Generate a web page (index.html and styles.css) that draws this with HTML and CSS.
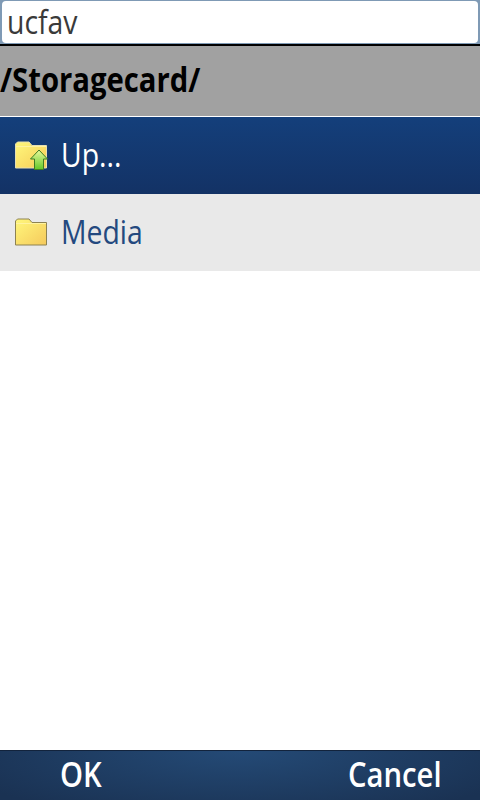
FILE: index.html
```html
<!DOCTYPE html>
<html lang="en">
<head>
    <meta charset="UTF-8">
    <meta name="viewport" content="width=device-width, initial-scale=1.0">
    <title>Select folder</title>
    <link rel="stylesheet" href="styles.css">
</head>
<body>
    <div class="page">
        <div class="name-bar">
            <div class="name-box"><span class="narrow">ucfav</span></div>
        </div>

        <div class="path"><span class="narrow">/Storagecard/</span></div>

        <div class="folder-list">
            <div class="folder-row selected">
                <svg class="folder-icon" width="34" height="30" viewBox="0 0 34 30">
                    <defs>
                        <linearGradient id="fillUp" x1="0" y1="0" x2="1" y2="1">
                            <stop offset="0" stop-color="#fff87c"/>
                            <stop offset="1" stop-color="#f5cb58"/>
                        </linearGradient>
                        <linearGradient id="fillArrow" x1="0" y1="0" x2="0" y2="1">
                            <stop offset="0" stop-color="#e8fa9c"/>
                            <stop offset="1" stop-color="#64c828"/>
                        </linearGradient>
                    </defs>
                    <path d="M1.5 27V3L3.5 1H15L18 4.5H32.5V27Z" fill="url(#fillUp)" stroke="#e6dfb0"/>
                    <path d="M2 5.5H32" stroke="#fff3a0" fill="none"/>
                    <path d="M25 9L33.5 18H29.5V28.5H20.5V18H16.5Z" fill="url(#fillArrow)" stroke="#3f7d22"/>
                </svg>
                <span class="narrow">Up...</span>
            </div>
            <div class="folder-row">
                <svg class="folder-icon" width="34" height="30" viewBox="0 0 34 30">
                    <defs>
                        <linearGradient id="fillFolder" x1="0" y1="0" x2="1" y2="1">
                            <stop offset="0" stop-color="#fff87c"/>
                            <stop offset="1" stop-color="#f5c95c"/>
                        </linearGradient>
                    </defs>
                    <path d="M1.5 27V3L3.5 1H15L18 4.5H32.5V27Z" fill="url(#fillFolder)" stroke="#8d8252"/>
                    <path d="M2 5.5H32" stroke="#fff3a0" fill="none"/>
                </svg>
                <span class="narrow">Media</span>
            </div>
        </div>

        <div class="softkeys">
            <span class="narrow">OK</span>
            <span class="narrow softkey-cancel">Cancel</span>
        </div>
    </div>
</body>
</html>
```

FILE: styles.css
```css
html, body {
    margin: 0;
    padding: 0;
}
body {
    font-family: "Open Sans", "Noto Sans", sans-serif;
    background: #fff;
}
.page {
    width: 480px;
    height: 800px;
    display: flex;
    flex-direction: column;
    overflow: hidden;
}
/* Open Sans is wider than the phone font, so squeeze it */
.narrow {
    display: inline-block;
    transform: scaleX(.86);
    transform-origin: left center;
}
.name-bar {
    height: 46px;
    box-sizing: border-box;
    padding: 1px 2px;
    background: #7f9ab5;
    border-bottom: 2px solid #000;
    flex: none;
}
.name-box {
    height: 42px;
    box-sizing: border-box;
    padding: 0 5px;
    background: #fff;
    border-radius: 4px;
    font-size: 33px;
    font-weight: 500;
    line-height: 41px;
    color: #3a3a3a;
}
.path {
    height: 71px;
    box-sizing: border-box;
    flex: none;
    background: #a1a1a1;
    border-bottom: 1px solid #fff;
    font-size: 34px;
    font-weight: 700;
    line-height: 67px;
    color: #000;
}
.folder-row {
    height: 77px;
    display: flex;
    align-items: center;
    gap: 13px;
    padding-left: 14px;
    background: #e9e9e9;
    color: #24497f;
    font-size: 33px;
    font-weight: 500;
}
.folder-row .narrow {
    margin-bottom: 3px;
}
.folder-row.selected {
    background: linear-gradient(#143f7b, #133265);
    color: #fff;
}
.folder-icon {
    flex: none;
}
.softkeys {
    margin-top: auto;
    height: 50px;
    flex: none;
    display: flex;
    align-items: center;
    padding: 0 0 3px 60px;
    background: radial-gradient(ellipse 300px 70px at 50% 0, #244a76, #1a3253);
    border-top: 1px solid #12233c;
    box-sizing: border-box;
    color: #fff;
    font-size: 34px;
    font-weight: 600;
}
.softkey-cancel {
    /* transform keeps the layout width, so place by left edge */
    margin-left: auto;
    width: 132px;
}
```
